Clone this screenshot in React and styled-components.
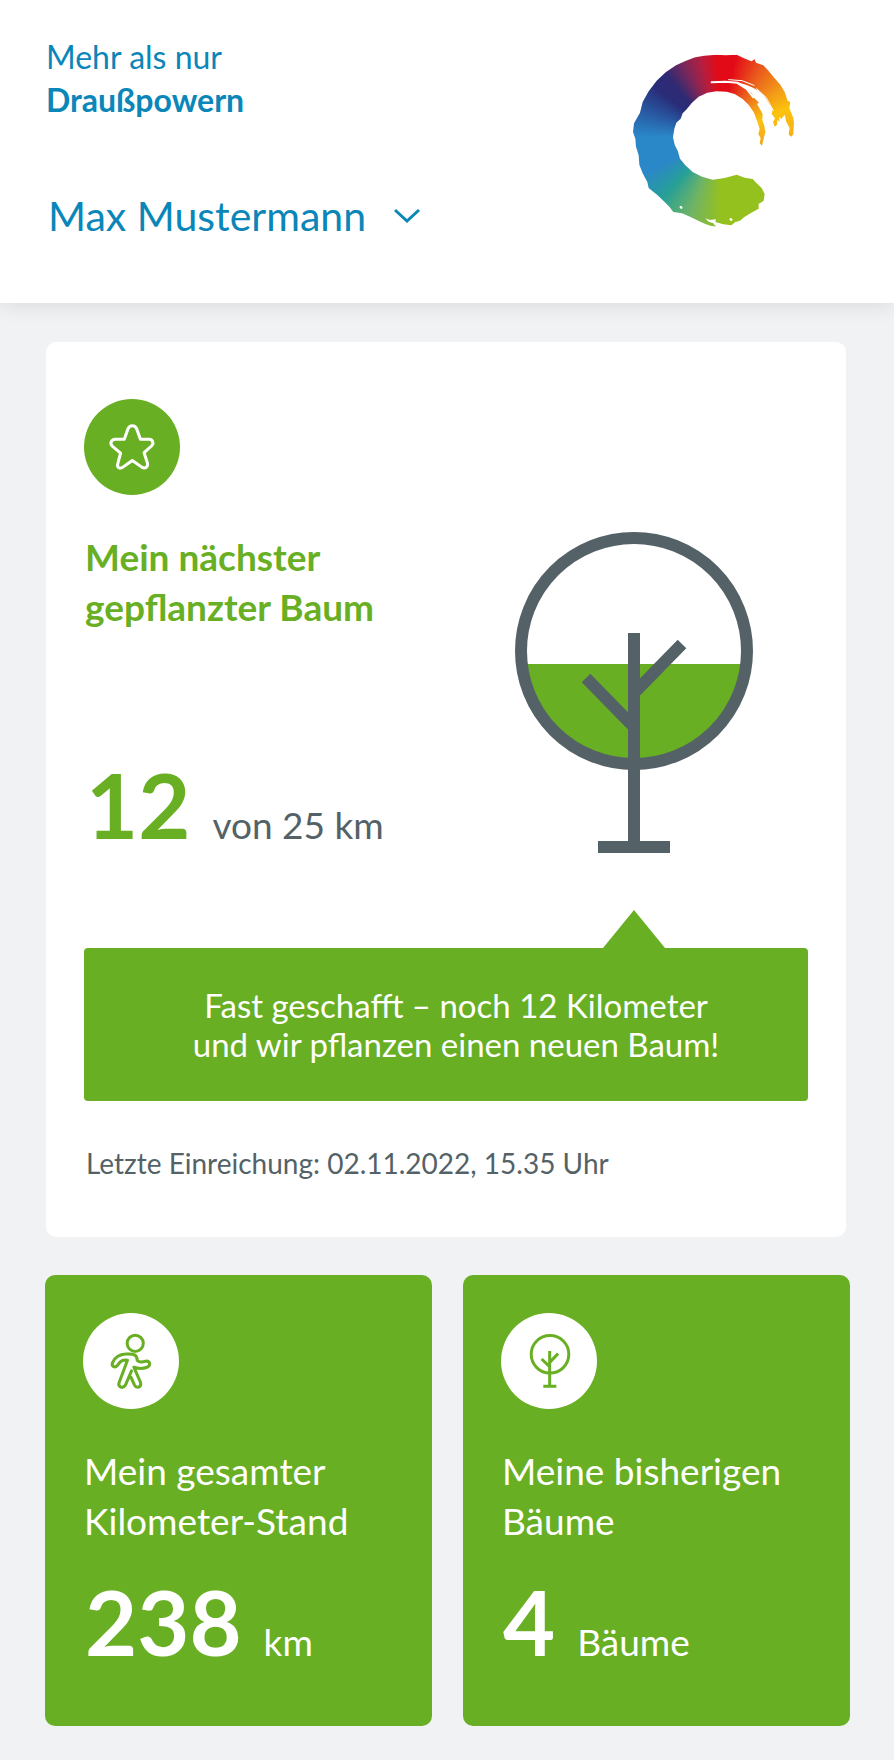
import React from "react";
import styled, { createGlobalStyle } from "styled-components";

const GREEN = "#68af23";
const BLUE = "#0a86b8";
const SLATE = "#546267";

const GlobalStyle = createGlobalStyle`
  *, *::before, *::after { box-sizing: border-box; }
  body {
    margin: 0;
    background: #f0f2f4;
    font-family: Lato, "Open Sans", sans-serif;
    color: ${SLATE};
  }
  h1, h2, p { margin: 0; font-weight: 400; }
  svg { display: block; }
`;

const Header = styled.header`
  display: flex;
  justify-content: space-between;
  align-items: flex-start;
  padding: 30px 74px 53px 46px;
  background: #fff;
  box-shadow: 0 2px 20px rgba(0, 0, 0, 0.1);
`;

const Intro = styled.div`
  display: flex;
  flex-direction: column;
  align-items: flex-start;
  gap: 70px;
  padding-top: 5px;
`;

const Claim = styled.h1`
  font-size: 32px;
  line-height: 43px;
  color: ${BLUE};

  strong { display: block; font-weight: 700; }
`;

const UserButton = styled.button`
  display: flex;
  align-items: center;
  gap: 28px;
  padding: 0 2px;
  border: 0;
  background: none;
  color: ${BLUE};
  font: inherit;
  font-size: 41px;
  line-height: 50px;
  cursor: pointer;
`;

const LogoSvg = styled.svg`
  width: 210px;
  height: 220px;
  flex: none;
`;

const LogoColours = styled.div`
  width: 630px;
  height: 660px;
  background: conic-gradient(
    from 0deg at 325px 320px,
    #e30a17 0deg, #e30a17 12deg, #ea5a1c 32deg, #f39a18 52deg, #fbc30d 68deg,
    #f6a81c 95deg, #95c11f 120deg, #95c11f 178deg, #6fb365 200deg, #27a096 222deg,
    #2a87c8 244deg, #2a87c8 270deg, #2857a0 290deg, #2a2c78 308deg, #2f2a74 320deg,
    #7d2759 335deg, #b81d3d 348deg, #e30a17 360deg
  );
`;

const Main = styled.main`
  display: flex;
  flex-direction: column;
  gap: 38px;
  padding: 39px 44px 34px 45px;
`;

const ProgressCard = styled.section`
  margin: 0 4px 0 1px;
  padding: 57px 38px 54px;
  border-radius: 10px;
  background: #fff;
`;

const ProgressTop = styled.div`
  display: flex;
  justify-content: space-between;
  align-items: flex-end;
  padding-right: 54px;
`;

const IconDisc = styled.div`
  width: 96px;
  height: 96px;
  border-radius: 50%;
  background: ${({ $inverted }) => ($inverted ? "#fff" : GREEN)};

  svg { width: 96px; height: 96px; }
`;

const CardTitle = styled.h2`
  margin-top: 37px;
  padding-left: 1px;
  font-size: 37px;
  line-height: 50px;
  font-weight: ${({ $strong }) => ($strong ? 700 : 400)};
  color: ${({ $strong }) => ($strong ? GREEN : "inherit")};
`;

const Value = styled.p`
  display: flex;
  align-items: baseline;
  gap: 22px;
  margin-top: ${({ $spacious }) => ($spacious ? "123px" : "26px")};
  padding-left: 2px;
  font-size: 37px;
  line-height: 40px;

  strong {
    font-size: 90px;
    line-height: 98px;
    font-weight: 700;
    color: ${({ $spacious }) => ($spacious ? GREEN : "inherit")};
  }
`;

const TreeSvg = styled.svg`
  width: 240px;
  height: 320px;
  flex: none;
  overflow: visible;
`;

const Banner = styled.p`
  position: relative;
  margin-top: 95px;
  padding: 38px 0 37px 20px;
  border-radius: 4px;
  background: ${GREEN};
  color: #fff;
  font-size: 33px;
  line-height: 39px;
  text-align: center;

  &::before {
    content: "";
    position: absolute;
    right: 143px;
    bottom: 100%;
    border: solid transparent;
    border-width: 0 31px 38px;
    border-bottom-color: ${GREEN};
  }
`;

const Note = styled.p`
  margin-top: 42px;
  padding-left: 2px;
  font-size: 28px;
  line-height: 40px;
`;

const Stats = styled.div`
  display: grid;
  grid-template-columns: 1fr 1fr;
  gap: 31px;
`;

const StatCard = styled.section`
  padding: 38px 38px 56px;
  border-radius: 10px;
  background: ${GREEN};
  color: #fff;
`;

function Logo() {
  return (
    <LogoSvg viewBox="0 0 630 660" role="img" aria-label="Logo">
      <clipPath id="brush">
        <path d="M283 77 L320 74 L346 76 L380 74 L402 85 L424 94 L434 88 L438 98 L460 106 L474 121 L490 140 L511 164 L524 186 L533 212 L541 216 L538 234 L549 262 L552 276 L550 312 L544 320 L536 314 L539 294 L529 276 L524 254 L514 267 L507 260 L509 275 L502 270 L501 284 L494 290 L489 276 L495 265 L485 252 L488 238 L476 220 L463 198 L446 182 L424 171 L408 164 L388 158 L404 170 L424 188 L433 204 L447 218 L441 222 L450 238 L458 252 L457 270 L463 288 L466 306 L460 330 L456 347 L449 340 L452 324 L445 312 L449 296 L440 270 L432 248 L417 226 L398 207 L374 192 L350 185 L320 184 L292 188 L266 200 L246 218 L230 238 L218 250 L212 266 L199 278 L193 296 L189 322 L194 344 L203 362 L210 386 L226 406 L248 426 L276 440 L308 449 L344 444 L380 434 L404 443 L428 447 L440 460 L455 474 L464 492 L461 512 L446 522 L446 536 L424 548 L402 562 L390 572 L376 576 L364 586 L340 583 L316 576 L318 568 L300 570 L286 565 L296 575 L310 580 L318 590 L304 588 L286 582 L268 574 L240 560 L216 550 L190 546 L178 530 L160 512 L142 495 L126 482 L116 474 L112 456 L98 430 L88 404 L86 376 L78 350 L76 326 L69 306 L72 280 L90 248 L98 216 L116 184 L140 152 L168 126 L198 106 L228 92 L256 82 Z" />
      </clipPath>
      <foreignObject width="630" height="660" clipPath="url(#brush)">
        <LogoColours />
      </foreignObject>
      <g fill="none" stroke="#fff" strokeLinecap="round">
        <path d="M305 157 L346 155 L382 158 L416 176" strokeWidth="6" />
        <path d="M356 149 L396 152 L432 166" strokeWidth="3" />
        <path d="M384 160 L410 177 L430 202" strokeWidth="6" />
        <path d="M440 176 L468 202 L490 242" strokeWidth="3" />
        <path d="M212 531 L214 533 M362 568 L364 569" strokeWidth="7" />
      </g>
    </LogoSvg>
  );
}

function Chevron() {
  return (
    <svg width="26" height="16" viewBox="0 0 26 16" fill="none" stroke="currentColor" strokeWidth="3" aria-hidden="true">
      <path d="M1 2 L13 13 L25 2" />
    </svg>
  );
}

function StarIcon() {
  return (
    <svg viewBox="134 206 286 286" fill="none" stroke="#fff" strokeWidth="9" strokeLinejoin="round" aria-hidden="true">
      <path d="M265 295 Q269 286 278 286 Q287 286 291 295 L302 326 L328 326 Q337 326 339 335 Q341 341 335 346 L313 366 L323 397 Q325 406 319 410 Q313 413 306 409 L278 389 L250 409 Q243 414 237 410 Q232 406 235 397 L243 367 L219 347 Q212 341 215 334 Q218 326 228 326 L254 326 Z" />
    </svg>
  );
}

function WalkerIcon() {
  return (
    <svg viewBox="12 10 285 285" fill="none" stroke={GREEN} strokeWidth="9" strokeLinecap="round" strokeLinejoin="round" aria-hidden="true">
      <circle cx="167" cy="100" r="24" />
      <path d="M156 182 L138 224 Q133 233 124 230 Q116 226 119 217 L144 150 Q128 148 121 157 L114 166 Q108 173 101 168 Q96 163 101 155 Q112 134 138 132 Q158 130 166 135 Q173 140 173 151 Q181 159 198 153 Q208 152 210 160 Q210 168 202 171 Q184 178 163 171 L183 217 Q185 227 177 230 Q169 232 165 224 L154 200" />
    </svg>
  );
}

function SmallTreeIcon() {
  return (
    <svg viewBox="19 10 286 286" fill="none" stroke={GREEN} strokeWidth="9" aria-hidden="true">
      <circle cx="165" cy="133" r="56" />
      <path d="M164 123 V228 M145 228 H184 M164 157 L189 131 M164 170 L140 147" />
    </svg>
  );
}

function ProgressTree() {
  return (
    <TreeSvg viewBox="0 0 240 320" fill="none" stroke={SLATE} strokeWidth="12" role="img" aria-label="Baum, 12 von 25 km">
      <path d="M8 131 H232 A113 113 0 0 1 8 131 Z" fill={GREEN} stroke="none" />
      <circle cx="120" cy="118" r="113" />
      <path d="M120 100 V314 M84 314 H156 M122 158 L168 111 M118 192 L72 145" />
    </TreeSvg>
  );
}

function Stat({ icon, title, value, unit }) {
  return (
    <StatCard>
      <IconDisc $inverted>{icon}</IconDisc>
      <CardTitle>
        {title[0]}
        <br />
        {title[1]}
      </CardTitle>
      <Value>
        <strong>{value}</strong> <span>{unit}</span>
      </Value>
    </StatCard>
  );
}

export default function App() {
  return (
    <>
      <GlobalStyle />
      <Header>
        <Intro>
          <Claim>
            Mehr als nur <strong>Draußpowern</strong>
          </Claim>
          <UserButton type="button">
            Max Mustermann
            <Chevron />
          </UserButton>
        </Intro>
        <Logo />
      </Header>
      <Main>
        <ProgressCard>
          <ProgressTop>
            <div>
              <IconDisc>
                <StarIcon />
              </IconDisc>
              <CardTitle $strong>
                Mein nächster
                <br />
                gepflanzter Baum
              </CardTitle>
              <Value $spacious>
                <strong>12</strong> <span>von 25 km</span>
              </Value>
            </div>
            <ProgressTree />
          </ProgressTop>
          <Banner>
            Fast geschafft – noch 12 Kilometer
            <br />
            und wir pflanzen einen neuen Baum!
          </Banner>
          <Note>Letzte Einreichung: 02.11.2022, 15.35 Uhr</Note>
        </ProgressCard>
        <Stats>
          <Stat icon={<WalkerIcon />} title={["Mein gesamter", "Kilometer-Stand"]} value="238" unit="km" />
          <Stat icon={<SmallTreeIcon />} title={["Meine bisherigen", "Bäume"]} value="4" unit="Bäume" />
        </Stats>
      </Main>
    </>
  );
}
